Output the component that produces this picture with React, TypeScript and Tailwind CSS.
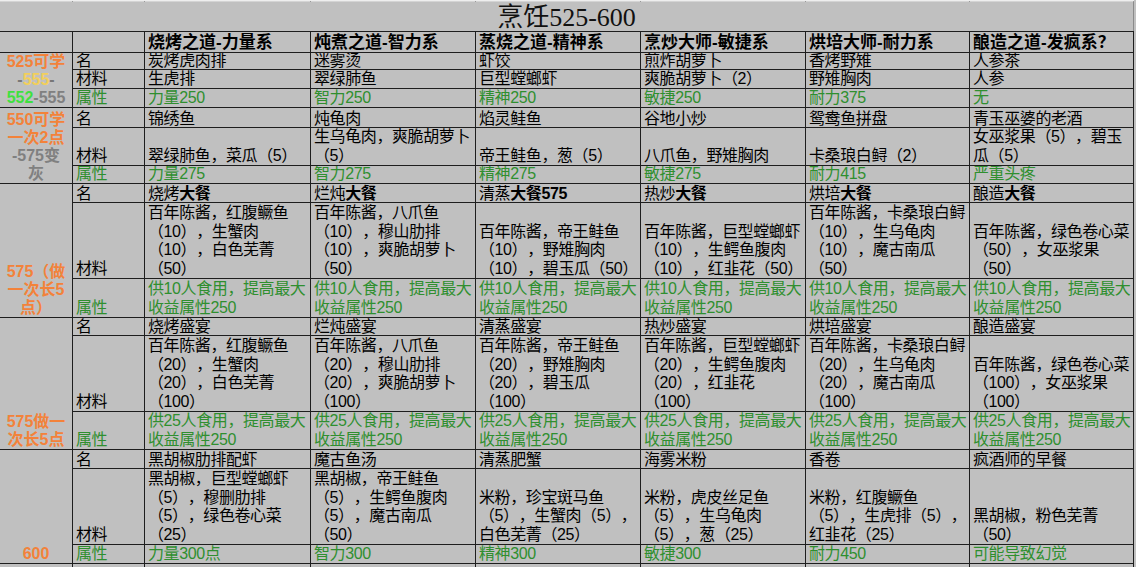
import React from "react";

const GREEN = "text-[#2f8f2f]";
const ORANGE = "text-[#f3823a]";

type Section = {
  left: React.ReactNode;
  names: React.ReactNode[];
  mats: string[][];
  attrs: string[][];
};

const headers = [
  "烧烤之道-力量系",
  "炖煮之道-智力系",
  "蒸烧之道-精神系",
  "烹炒大师-敏捷系",
  "烘培大师-耐力系",
  "酿造之道-发疯系？",
];

const big = (a: string, b: string) => (
  <span>
    {a}
    <b className="font-bold">{b}</b>
  </span>
);

const sections: Section[] = [
  {
    left: (
      <>
        <div className={ORANGE}>525可学</div>
        <div className="text-[#777]">
          -<span className="text-[#f2cf5b]">555</span>-
        </div>
        <div>
          <span className="text-[#3fe03f]">552</span>
          <span className="text-[#808080]">-555</span>
        </div>
      </>
    ),
    names: ["炭烤虎肉排", "迷雾烫", "虾饺", "煎炸胡萝卜", "香烤野雉", "人参茶"],
    mats: [["生虎排"], ["翠绿肺鱼"], ["巨型螳螂虾"], ["爽脆胡萝卜（2）"], ["野雉胸肉"], ["人参"]],
    attrs: [["力量250"], ["智力250"], ["精神250"], ["敏捷250"], ["耐力375"], ["无"]],
  },
  {
    left: (
      <>
        <div className={ORANGE}>550可学</div>
        <div className={ORANGE}>一次2点</div>
        <div className="text-[#808080]">-575变</div>
        <div className="text-[#808080]">灰</div>
      </>
    ),
    names: ["锦绣鱼", "炖龟肉", "焰灵鲑鱼", "谷地小炒", "鸳鸯鱼拼盘", "青玉巫婆的老酒"],
    mats: [
      ["翠绿肺鱼，菜瓜（5）"],
      ["生乌龟肉，爽脆胡萝卜", "（5）"],
      ["帝王鲑鱼，葱（5）"],
      ["八爪鱼，野雉胸肉"],
      ["卡桑琅白鲟（2）"],
      ["女巫浆果（5），碧玉", "瓜（5）"],
    ],
    attrs: [["力量275"], ["智力275"], ["精神275"], ["敏捷275"], ["耐力415"], ["严重头疼"]],
  },
  {
    left: (
      <>
        <div className={ORANGE}>575（做</div>
        <div className={ORANGE}>一次长5</div>
        <div className={ORANGE}>点）</div>
      </>
    ),
    names: [
      big("烧烤", "大餐"),
      big("烂炖", "大餐"),
      big("清蒸", "大餐575"),
      big("热炒", "大餐"),
      big("烘培", "大餐"),
      big("酿造", "大餐"),
    ],
    mats: [
      ["百年陈酱，红腹鳜鱼", "（10），生蟹肉", "（10），白色芜菁", "（50）"],
      ["百年陈酱，八爪鱼", "（10），穆山肋排", "（10），爽脆胡萝卜", "（50）"],
      ["百年陈酱，帝王鲑鱼", "（10），野雉胸肉", "（10），碧玉瓜（50）"],
      ["百年陈酱，巨型螳螂虾", "（10），生鳄鱼腹肉", "（10），红韭花（50）"],
      ["百年陈酱，卡桑琅白鲟", "（10），生乌龟肉", "（10），魔古南瓜", "（50）"],
      ["百年陈酱，绿色卷心菜", "（50），女巫浆果", "（50）"],
    ],
    attrs: Array(6).fill(["供10人食用，提高最大", "收益属性250"]),
  },
  {
    left: (
      <>
        <div className={ORANGE}>575做一</div>
        <div className={ORANGE}>次长5点</div>
      </>
    ),
    names: ["烧烤盛宴", "烂炖盛宴", "清蒸盛宴", "热炒盛宴", "烘培盛宴", "酿造盛宴"],
    mats: [
      ["百年陈酱，红腹鳜鱼", "（20），生蟹肉", "（20），白色芜菁", "（100）"],
      ["百年陈酱，八爪鱼", "（20），穆山肋排", "（20），爽脆胡萝卜", "（100）"],
      ["百年陈酱，帝王鲑鱼", "（20），野雉胸肉", "（20），碧玉瓜", "（100）"],
      ["百年陈酱，巨型螳螂虾", "（20），生鳄鱼腹肉", "（20），红韭花", "（100）"],
      ["百年陈酱，卡桑琅白鲟", "（20），生乌龟肉", "（20），魔古南瓜", "（100）"],
      ["百年陈酱，绿色卷心菜", "（100），女巫浆果", "（100）"],
    ],
    attrs: Array(6).fill(["供25人食用，提高最大", "收益属性250"]),
  },
  {
    left: <div className={ORANGE}>600</div>,
    names: ["黑胡椒肋排配虾", "魔古鱼汤", "清蒸肥蟹", "海雾米粉", "香卷", "疯酒师的早餐"],
    mats: [
      ["黑胡椒，巨型螳螂虾", "（5），穆删肋排", "（5），绿色卷心菜", "（25）"],
      ["黑胡椒，帝王鲑鱼", "（5），生鳄鱼腹肉", "（5），魔古南瓜", "（50）"],
      ["米粉，珍宝斑马鱼", "（5），生蟹肉（5），", "白色芜菁（25）"],
      ["米粉，虎皮丝足鱼", "（5），生乌龟肉", "（5），葱（25）"],
      ["米粉，红腹鳜鱼", "（5），生虎排（5），", "红韭花（25）"],
      ["黑胡椒，粉色芜菁", "（50）"],
    ],
    attrs: [["力量300点"], ["智力300"], ["精神300"], ["敏捷300"], ["耐力450"], ["可能导致幻觉"]],
  },
];

const cell =
  "bg-[#c0c0c0] overflow-hidden flex flex-col justify-end pl-[3px] whitespace-nowrap tracking-[-0.4px]";

function Lines({ lines, className = "" }: { lines: string[]; className?: string }) {
  return (
    <div className={`${cell} ${className}`}>
      {lines.map((l, i) => (
        <div key={i}>{l}</div>
      ))}
    </div>
  );
}

export default function App() {
  return (
    <div className='w-[1136px] h-[567px] overflow-hidden bg-[#c0c0c0] text-black text-[16px] leading-[18.5px] [text-spacing-trim:space-all] font-["Liberation_Sans","Noto_Sans_CJK_SC",sans-serif]'>
      {/* leftover bit of the row above */}
      <div className="grid h-[2px] w-[1134px] grid-cols-[72px_71px_165px_164px_164px_164px_163px_163px] gap-x-px bg-[#9a9a9a] border-t border-[#eeeeee]">
        {Array.from({ length: 8 }).map((_, i) => (
          <div key={i} className="bg-[#d4d4d4]" />
        ))}
      </div>

      {/* Title */}
      <div className="h-[29px] w-[1134px] border-r border-[#8a8a8a] flex items-end justify-center">
        <div className='text-[26px] leading-[27px] font-["Liberation_Serif","Noto_Sans_CJK_SC",serif] text-[#111]'>
          烹饪525-600
        </div>
      </div>

      {/* Table */}
      <div className="grid w-[1134px] border-t border-r border-[#1e1e1e] bg-[#1e1e1e] gap-px grid-cols-[72px_71px_165px_164px_164px_164px_163px_163px] grid-rows-[20px_16px_18px_18px_19px_37px_17px_18px_75px_38px_17px_75px_37px_18px_75px_18px_3px]">
        {/* Header */}
        <div className={cell} />
        <div className={cell} />
        {headers.map((h) => (
          <div key={h} className={`${cell} font-bold text-[17px] leading-[19px] tracking-normal`}>
            {h}
          </div>
        ))}

        {sections.map((s, si) => (
          <React.Fragment key={si}>
            <div className="row-span-3 bg-[#c0c0c0] flex flex-col justify-end items-center font-bold leading-[18px] whitespace-nowrap overflow-hidden">
              {s.left}
            </div>
            <div className={`${cell} leading-[16px]`}>名</div>
            {s.names.map((n, i) => (
              <div key={i} className={`${cell} leading-[16px]`}>
                {n}
              </div>
            ))}
            <div className={cell}>材料</div>
            {s.mats.map((m, i) => (
              <Lines key={i} lines={m} />
            ))}
            <div className={`${cell} ${GREEN}`}>属性</div>
            {s.attrs.map((a, i) => (
              <Lines key={i} lines={a} className={GREEN} />
            ))}
          </React.Fragment>
        ))}

        {Array.from({ length: 8 }).map((_, i) => (
          <div key={`tail-${i}`} className="bg-[#c0c0c0]" />
        ))}
      </div>
    </div>
  );
}
